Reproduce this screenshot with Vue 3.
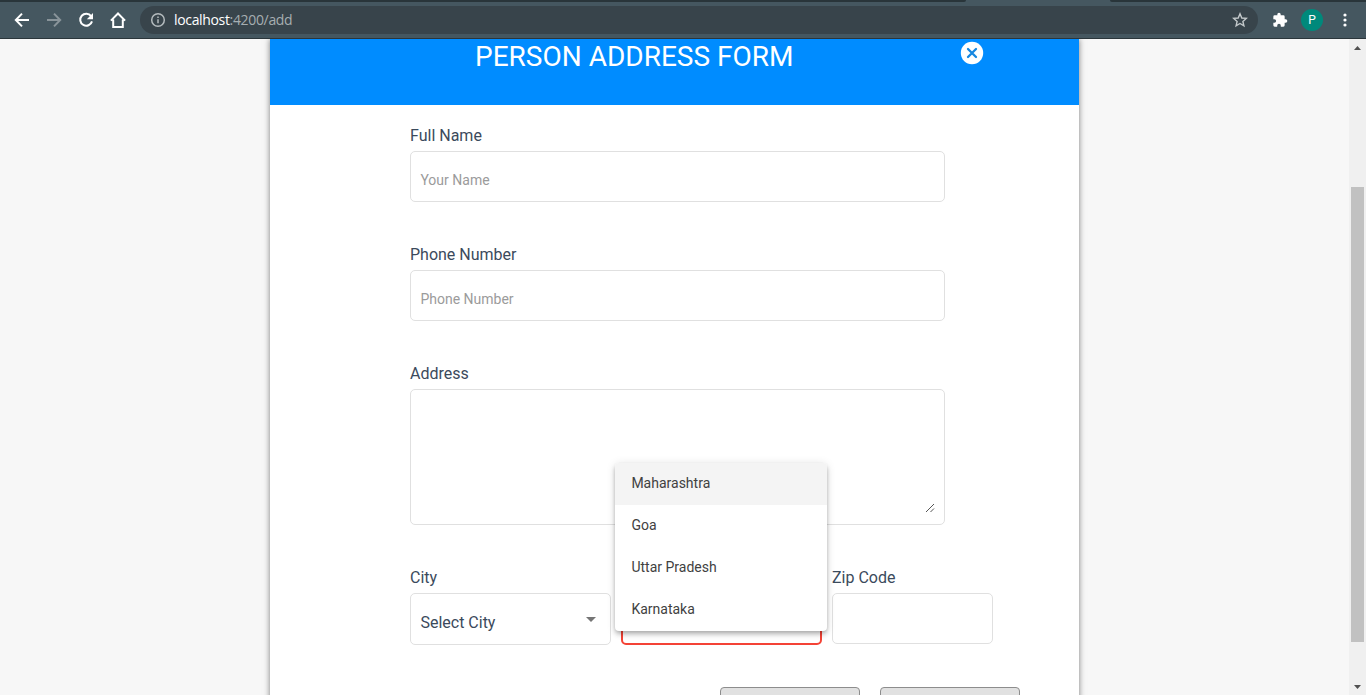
<script setup>
import { ref } from 'vue'

const fullName = ref('')
const phone = ref('')
const address = ref('')
const zip = ref('')
const states = ['Maharashtra', 'Goa', 'Uttar Pradesh', 'Karnataka']
const active = ref(0)
</script>

<template>
  <div class="window">
    <header class="browser">
      <div class="tabs"><span class="tabs-left"></span><span class="tabs-right"></span></div>
      <div class="toolbar">
        <svg class="tool" viewBox="0 0 20 20"><path d="M17 10H4.2M10 3.6 3.8 10l6.2 6.4" /></svg>
        <svg class="tool muted" viewBox="0 0 20 20"><path d="M3 10h12.8M10 3.6l6.2 6.4-6.2 6.4" /></svg>
        <svg class="tool" viewBox="0 0 20 20"><path d="M15.1 6.2A6 6 0 1 0 16 11.4" /><path class="solid" d="M17 3v6.2h-6.2z" /></svg>
        <svg class="tool" viewBox="0 0 20 20"><path d="M2.9 10.6 10 3.5l7.1 7.1M5.2 9.6v7.5h9.6V9.6" /></svg>
        <div class="omnibox">
          <svg class="info" viewBox="0 0 16 16"><circle cx="8" cy="8" r="6.3" /><path d="M8 7.2v4M8 4.5v1.5" /></svg>
          <span class="url"><b>localhost</b>:4200/add</span>
          <svg class="star" viewBox="0 0 16 16"><path d="M8 1.8 9.8 6l4.5.4-3.4 3 1 4.4L8 11.5l-3.9 2.3 1-4.4-3.4-3L6.2 6z" /></svg>
        </div>
        <svg class="puzzle" viewBox="0 0 24 24"><path d="M20.5 11H19V7a2 2 0 0 0-2-2h-4V3.500a2.500 2.500 0 0 0-5 0V5H4a2 2 0 0 0-2 2v3.800h1.500a2.700 2.700 0 0 1 0 5.400H2V20a2 2 0 0 0 2 2h3.800v-1.500a2.700 2.700 0 0 1 5.400 0V22H17a2 2 0 0 0 2-2v-4h1.500a2.500 2.500 0 0 0 0-5z" /></svg>
        <span class="avatar">P</span>
        <svg class="dots" viewBox="0 0 4 14"><circle cx="2" cy="2" r="1.6" /><circle cx="2" cy="7" r="1.6" /><circle cx="2" cy="12" r="1.6" /></svg>
      </div>
    </header>

    <div class="viewport">
      <main class="page">
        <section class="card">
          <div class="card-head">
            <h1>PERSON ADDRESS FORM</h1>
            <svg class="close" viewBox="0 0 24 24"><circle cx="12" cy="12" r="11.2" /><path d="m8 8 8 8m0-8-8 8" /></svg>
          </div>
          <form class="form" @submit.prevent>
            <div class="field">
              <label>Full Name</label>
              <input v-model="fullName" class="control" placeholder="Your Name" />
            </div>
            <div class="field">
              <label>Phone Number</label>
              <input v-model="phone" class="control" placeholder="Phone Number" />
            </div>
            <div class="field">
              <label>Address</label>
              <div class="area">
                <textarea v-model="address"></textarea>
                <svg class="grip" viewBox="0 0 10 10"><path d="M1 9 9 1M5.500 9 9 5.500" /></svg>
              </div>
            </div>
            <div class="row">
              <div class="field city">
                <label>City</label>
                <div class="select"><span>Select City</span><i class="caret"></i></div>
              </div>
              <div class="field state">
                <label></label>
                <div class="select invalid"></div>
                <ul class="menu">
                  <li v-for="(s, i) in states" :key="s" :class="{ active: i === active }" @mouseenter="active = i">{{ s }}</li>
                </ul>
              </div>
              <div class="field zip">
                <label>Zip Code</label>
                <input v-model="zip" class="control" />
              </div>
            </div>
          </form>
          <div class="actions">
            <button type="button"></button>
            <button type="button"></button>
          </div>
        </section>
      </main>
      <aside class="scrollbar">
        <svg class="arrow" viewBox="0 0 7 4"><path d="M0 4h7L3.500 0z" /></svg>
        <div class="thumb"></div>
        <svg class="arrow" viewBox="0 0 7 4"><path d="M0 0h7L3.500 4z" /></svg>
      </aside>
    </div>
  </div>
</template>

<style>
body { margin: 0; overflow: hidden; }
</style>

<style scoped>
* { box-sizing: border-box; }
.window { display: flex; flex-direction: column; width: 1366px; height: 695px; overflow: hidden; background: #f7f7f7; font-family: Roboto, "Liberation Sans", sans-serif; }
.browser { flex: none; height: 39px; background: #455760; border-bottom: 1px solid #2b363b; }
.tabs { display: flex; justify-content: space-between; height: 2px; }
.tabs-left { width: 966px; background: #29353a; border-bottom-right-radius: 4px; }
.tabs-right { width: 256px; background: #29353a; border-bottom-left-radius: 4px; }
.toolbar { display: flex; align-items: center; height: 36px; padding-left: 12px; }
.tool { flex: none; width: 20px; height: 20px; margin-right: 12px; fill: none; stroke: #fff; stroke-width: 2; }
.tool.muted { stroke: #89949a; }
.tool .solid { fill: #fff; stroke: none; }
.omnibox { display: flex; align-items: center; width: 1118px; height: 28px; padding: 0 10px; border-radius: 14px; background: #38444b; }
.info { width: 16px; height: 16px; fill: none; stroke: #b4bbbe; stroke-width: 1.5; }
.url { margin-left: 8px; flex: 1; font: 14px/20px "Open Sans", "Noto Sans", sans-serif; letter-spacing: -0.34px; color: #a6aeb1; }
.url b { font-weight: 400; color: #fff; }
.star { width: 16px; height: 16px; fill: none; stroke: #c4c9cb; stroke-width: 1.4; }
.puzzle { width: 16px; height: 16px; margin-left: 14px; fill: #fff; }
.avatar { width: 22px; height: 22px; margin-left: 13px; border-radius: 50%; background: #00897b; color: #fff; font-size: 12px; line-height: 23px; text-align: center; }
.dots { width: 4px; height: 14px; margin-left: 20px; fill: #fff; }
.viewport { display: flex; flex: 1; min-height: 0; }
.page { flex: 1; padding-left: 270px; overflow: hidden; }
.card { width: 809px; height: 700px; background: #fff; box-shadow: 0 0 6px rgba(0, 0, 0, .5); }
.card-head { display: flex; height: 66px; padding: 0 95px 0 205px; justify-content: space-between; align-items: flex-start; background: #008cff; color: #fff; }
h1 { margin: 2px 0 0; font-size: 28px; line-height: 32px; font-weight: 400; white-space: nowrap; }
.close { width: 24px; height: 24px; margin-top: 2px; fill: #fff; }
.close path { fill: none; stroke: #1687e0; stroke-width: 2.3; stroke-linecap: round; }
.form { display: flex; flex-direction: column; gap: 40px; width: 583px; margin: 18px 0 0 140px; }
.field { display: flex; flex-direction: column; gap: 4px; width: 535px; }
label { height: 24px; font-size: 16px; line-height: 26px; color: #3b4a5c; }
.control { width: 100%; height: 51px; padding: 7px 9.4px 0; border: 1px solid #e0e0e0; border-radius: 5px; outline: 0; background: #fff; font: 14px Roboto, sans-serif; color: #3b4a5c; }
.control::placeholder { color: #9b9b9b; opacity: 1; }
.area { position: relative; height: 136px; border: 1px solid #e0e0e0; border-radius: 5px; }
textarea { display: block; width: 100%; height: 100%; padding: 16px 9px; border: 0; outline: 0; resize: none; background: transparent; font: 14px Roboto, sans-serif; }
.grip { position: absolute; right: 9px; bottom: 11px; width: 10px; height: 10px; fill: none; stroke: #555; stroke-width: 1; }
.row { display: flex; gap: 10px; }
.city, .state { width: 201px; }
.state { position: relative; }
.zip { width: 161px; }
.select { display: flex; align-items: center; justify-content: space-between; height: 52px; padding: 6px 14px 0 9.4px; border: 1px solid #e0e0e0; border-radius: 5px; font-size: 16px; color: #3b4a5c; }
.select.invalid { border: 2px solid #f44336; }
.caret { border: 5px solid transparent; border-top-color: #757575; border-bottom: 0; margin-top: -6px; }
.menu { position: absolute; left: -6px; top: -102px; width: 212px; margin: 0; padding: 0; list-style: none; overflow: hidden; border-radius: 4px; background: #fff; box-shadow: 0 2px 4px -1px rgba(0, 0, 0, .2), 0 4px 5px rgba(0, 0, 0, .14), 0 1px 10px rgba(0, 0, 0, .12); }
.menu li { height: 42px; padding: 0 16.4px; font-size: 14px; line-height: 41px; color: #414141; }
.menu .active { background: #f4f4f4; }
.actions { display: flex; gap: 20px; margin: 42px 0 0 450px; }
.actions button { width: 140px; height: 38px; border: 1px solid #8d8d8d; border-radius: 4px; background: #e1e1e1; }
.scrollbar { display: flex; flex-direction: column; align-items: center; width: 17px; padding: 7px 0 6px; background: #f0f0f0; }
.arrow { flex: none; width: 7px; height: 4px; fill: #505050; }
.thumb { flex: none; width: 13px; height: 455px; margin: 137px 0 auto; background: #c1c1c1; }
</style>
